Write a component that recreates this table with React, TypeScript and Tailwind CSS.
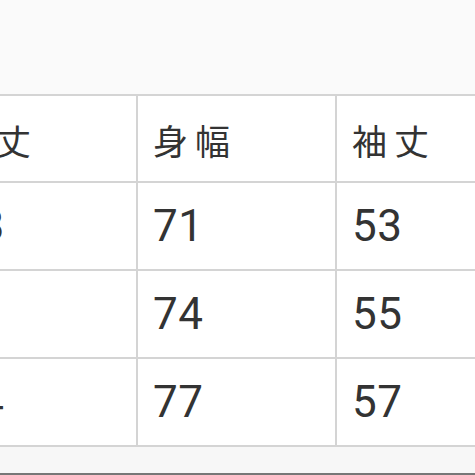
import React from "react";

const header = ["着丈", "身幅", "袖丈"];
const rows = [
  ["68", "71", "53"],
  ["71", "74", "55"],
  ["74", "77", "57"],
];

export default function App() {
  return (
    <div className="w-[475px] h-[475px] overflow-hidden bg-[#fafafa] flex flex-col">
      <div className="h-[94px] shrink-0 bg-[#fafafa]" />
      <div className="ml-[-63px] w-[599px] shrink-0 border-t-2 border-l-2 border-[#d4d4d4] bg-white">
        <div className="flex h-[87px]">
          {header.map((h, i) => (
            <div
              key={i}
              className="w-[199px] shrink-0 border-r-2 border-b-2 border-[#d4d4d4] flex items-center pl-[15px] pt-[2px] text-[35px] tracking-[7px] text-[#333] leading-none"
              style={{ fontFamily: '"Noto Sans CJK JP", sans-serif' }}
            >
              {h}
            </div>
          ))}
        </div>
        {rows.map((r, ri) => (
          <div key={ri} className="flex h-[88px]">
            {r.map((v, ci) => (
              <div
                key={ci}
                className="w-[199px] shrink-0 border-r-2 border-b-2 border-[#d4d4d4] flex items-center pl-[15px] text-[44px] tracking-[0.5px] text-[#333] leading-none"
                style={{ fontFamily: "Roboto, sans-serif" }}
              >
                {v}
              </div>
            ))}
          </div>
        ))}
      </div>
      <div className="flex-1 bg-[#f7f7f7]" />
      <div className="h-[2px] shrink-0 bg-[#777]" />
    </div>
  );
}
